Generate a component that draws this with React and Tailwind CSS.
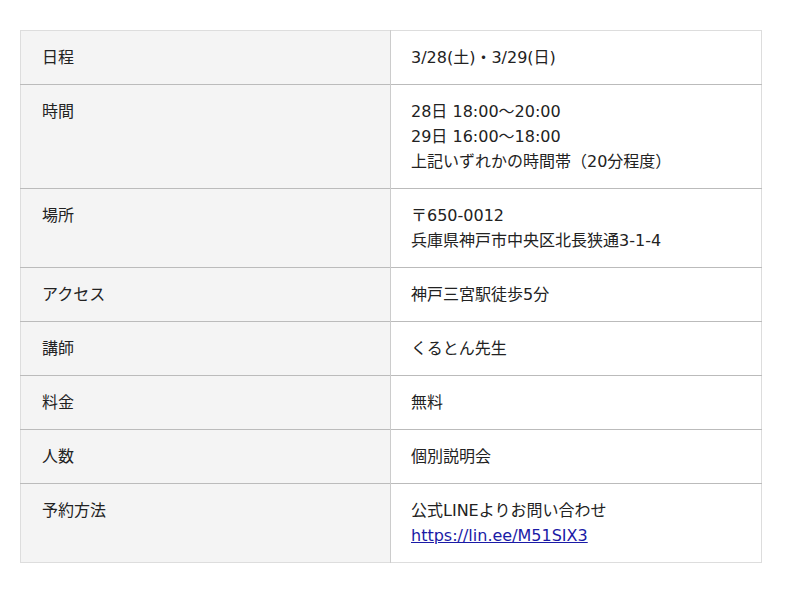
const rows = [
  { label: "日程", lines: ["3/28(土)・3/29(日)"] },
  {
    label: "時間",
    lines: ["28日 18:00〜20:00", "29日 16:00〜18:00", "上記いずれかの時間帯（20分程度）"],
  },
  { label: "場所", lines: ["〒650-0012", "兵庫県神戸市中央区北長狭通3-1-4"] },
  { label: "アクセス", lines: ["神戸三宮駅徒歩5分"] },
  { label: "講師", lines: ["くるとん先生"] },
  { label: "料金", lines: ["無料"] },
  { label: "人数", lines: ["個別説明会"] },
  { label: "予約方法", lines: ["公式LINEよりお問い合わせ"], link: "https://lin.ee/M51SIX3" },
];

export default function App() {
  return (
    <div
      className="min-h-[593px] bg-white pt-[30px] pl-[20px] text-[16px] leading-[25px] text-[#222]"
      style={{ fontFamily: '"DejaVu Sans", "Noto Sans CJK JP", sans-serif' }}
    >
      <table className="w-[742px] table-fixed border-collapse border border-[#dddddd]">
        <tbody>
          {rows.map((r, i) => (
            <tr
              key={r.label}
              className={i < rows.length - 1 ? "border-b border-[#bbbbbb]" : ""}
            >
              <td className="w-[370px] bg-[#f4f4f4] border-r border-[#cccccc] pl-[21px] pr-4 py-[14px] align-top">
                {r.label}
              </td>
              <td className="pl-[20px] pr-4 py-[14px] align-top">
                {r.lines.map((l) => (
                  <div key={l}>{l}</div>
                ))}
                {r.link && (
                  <a href={r.link} className="text-[#1a1aa6] underline">
                    {r.link}
                  </a>
                )}
              </td>
            </tr>
          ))}
        </tbody>
      </table>
    </div>
  );
}
